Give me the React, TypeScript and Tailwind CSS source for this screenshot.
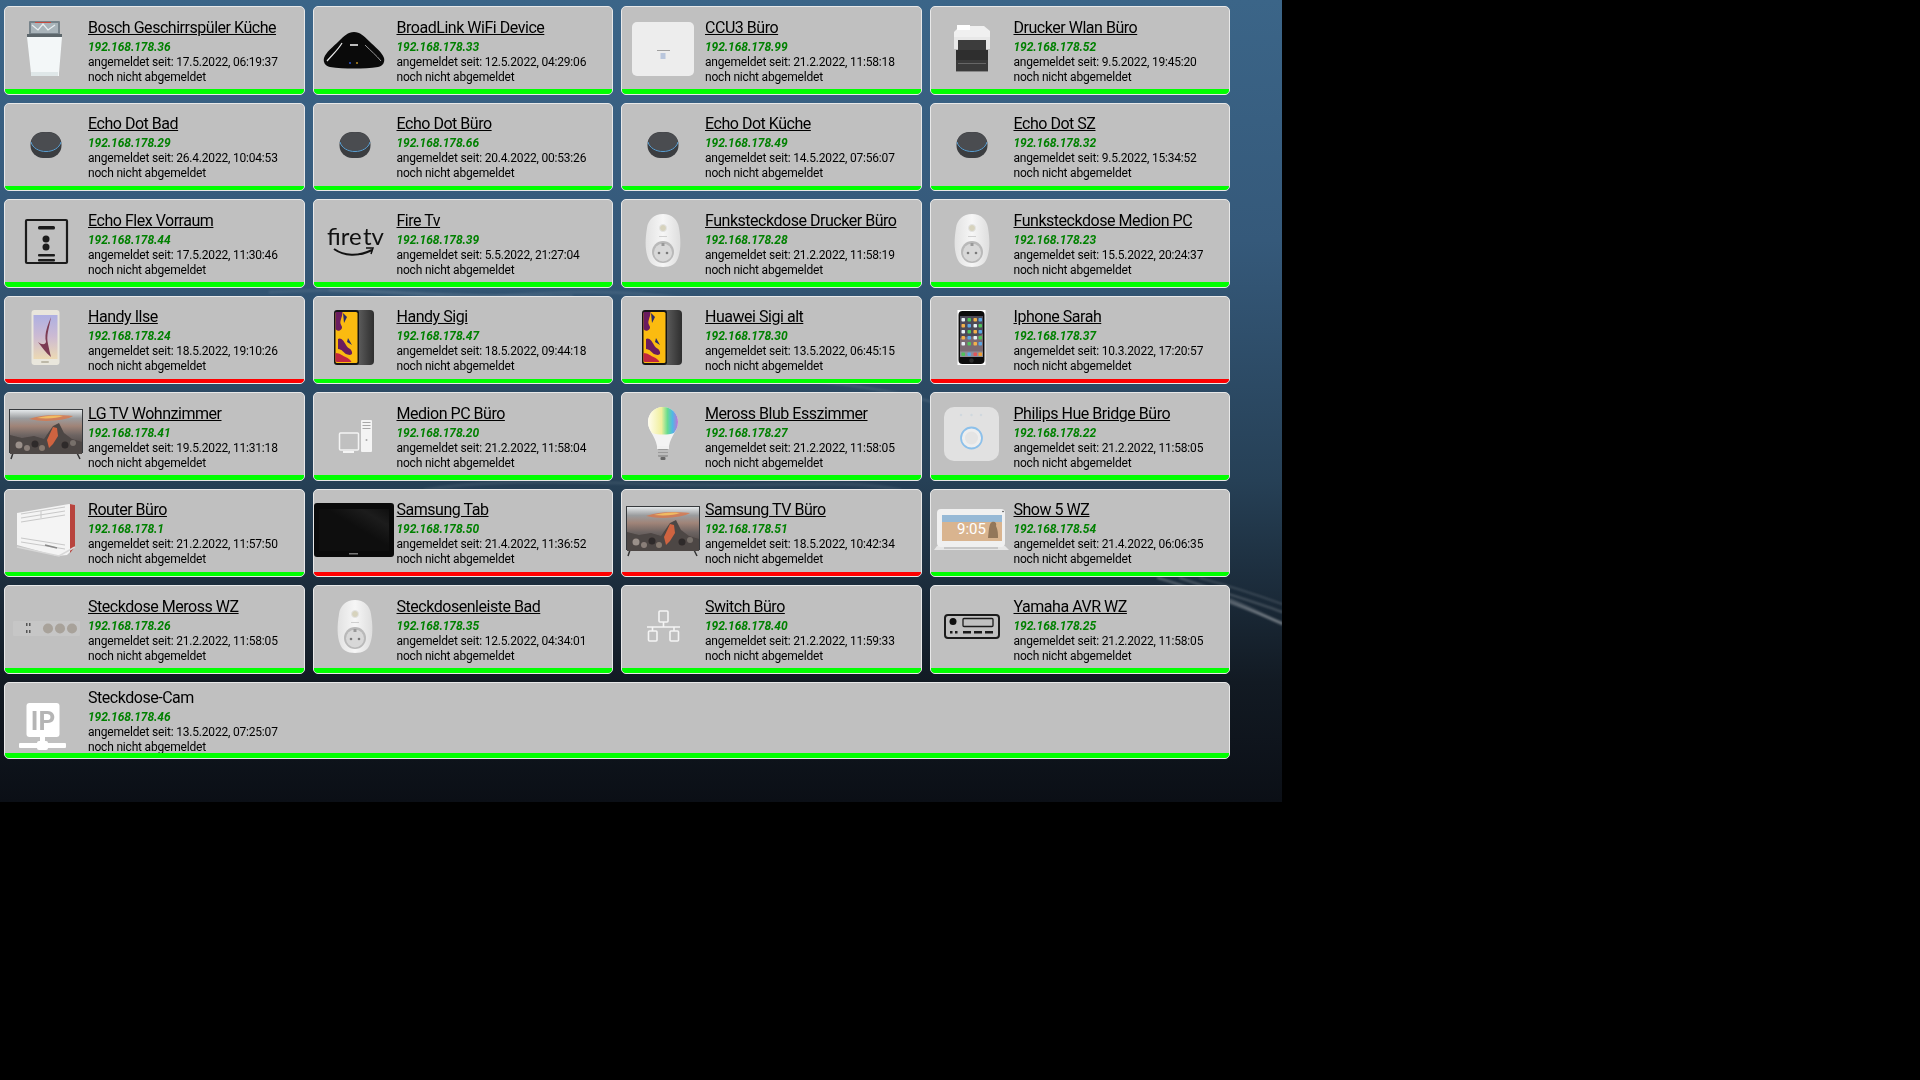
import type { ReactNode } from 'react';

type Device = {
    name: string;
    ip: string;
    since: string;
    icon: string;
    offline?: boolean;
};

const devices: Device[] = [
    { name: 'Bosch Geschirrspüler Küche', ip: '192.168.178.36', since: '17.5.2022, 06:19:37', icon: 'dishwasher' },
    { name: 'BroadLink WiFi Device', ip: '192.168.178.33', since: '12.5.2022, 04:29:06', icon: 'broadlink' },
    { name: 'CCU3 Büro', ip: '192.168.178.99', since: '21.2.2022, 11:58:18', icon: 'ccu' },
    { name: 'Drucker Wlan Büro', ip: '192.168.178.52', since: '9.5.2022, 19:45:20', icon: 'printer' },
    { name: 'Echo Dot Bad', ip: '192.168.178.29', since: '26.4.2022, 10:04:53', icon: 'echo' },
    { name: 'Echo Dot Büro', ip: '192.168.178.66', since: '20.4.2022, 00:53:26', icon: 'echo' },
    { name: 'Echo Dot Küche', ip: '192.168.178.49', since: '14.5.2022, 07:56:07', icon: 'echo' },
    { name: 'Echo Dot SZ', ip: '192.168.178.32', since: '9.5.2022, 15:34:52', icon: 'echo' },
    { name: 'Echo Flex Vorraum', ip: '192.168.178.44', since: '17.5.2022, 11:30:46', icon: 'flex' },
    { name: 'Fire Tv', ip: '192.168.178.39', since: '5.5.2022, 21:27:04', icon: 'firetv' },
    { name: 'Funksteckdose Drucker Büro', ip: '192.168.178.28', since: '21.2.2022, 11:58:19', icon: 'plug' },
    { name: 'Funksteckdose Medion PC', ip: '192.168.178.23', since: '15.5.2022, 20:24:37', icon: 'plug' },
    { name: 'Handy Ilse', ip: '192.168.178.24', since: '18.5.2022, 19:10:26', icon: 'galaxy', offline: true },
    { name: 'Handy Sigi', ip: '192.168.178.47', since: '18.5.2022, 09:44:18', icon: 'huawei' },
    { name: 'Huawei Sigi alt', ip: '192.168.178.30', since: '13.5.2022, 06:45:15', icon: 'huawei' },
    { name: 'Iphone Sarah', ip: '192.168.178.37', since: '10.3.2022, 17:20:57', icon: 'iphone', offline: true },
    { name: 'LG TV Wohnzimmer', ip: '192.168.178.41', since: '19.5.2022, 11:31:18', icon: 'tv' },
    { name: 'Medion PC Büro', ip: '192.168.178.20', since: '21.2.2022, 11:58:04', icon: 'pc' },
    { name: 'Meross Blub Esszimmer', ip: '192.168.178.27', since: '21.2.2022, 11:58:05', icon: 'bulb' },
    { name: 'Philips Hue Bridge Büro', ip: '192.168.178.22', since: '21.2.2022, 11:58:05', icon: 'hue' },
    { name: 'Router Büro', ip: '192.168.178.1', since: '21.2.2022, 11:57:50', icon: 'router' },
    { name: 'Samsung Tab', ip: '192.168.178.50', since: '21.4.2022, 11:36:52', icon: 'tablet', offline: true },
    { name: 'Samsung TV Büro', ip: '192.168.178.51', since: '18.5.2022, 10:42:34', icon: 'tv', offline: true },
    { name: 'Show 5 WZ', ip: '192.168.178.54', since: '21.4.2022, 06:06:35', icon: 'show' },
    { name: 'Steckdose Meross WZ', ip: '192.168.178.26', since: '21.2.2022, 11:58:05', icon: 'strip' },
    { name: 'Steckdosenleiste Bad', ip: '192.168.178.35', since: '12.5.2022, 04:34:01', icon: 'plug' },
    { name: 'Switch Büro', ip: '192.168.178.40', since: '21.2.2022, 11:59:33', icon: 'switch' },
    { name: 'Yamaha AVR WZ', ip: '192.168.178.25', since: '21.2.2022, 11:58:05', icon: 'avr' },
];

function Svg({ children }: { children: ReactNode }) {
    return (
        <svg viewBox="0 0 80 56" className="block h-[56px] w-[80px]">
            <defs>
                <filter id="soft" x="-5%" y="-5%" width="110%" height="110%">
                    <feGaussianBlur stdDeviation=".5" />
                </filter>
            </defs>
            {children}
        </svg>
    );
}

const icons: Record<string, ReactNode> = {
    dishwasher: (
        <Svg>
            <rect x="24" y="1" width="31" height="15" rx="1" fill="#77838a" />
            <g filter="url(#soft)">
                <rect x="26" y="3" width="27" height="10" fill="#a9b4ba" />
                <rect x="30" y="2" width="16" height="1" fill="#c8483e" />
                <path d="M27 5l6 5 5-6 5 6 7-5" stroke="#e8eef0" fill="none" strokeWidth="1.2" />
            </g>
            <rect x="22" y="14" width="35" height="3" fill="#5c666b" />
            <path d="M22 17h35l-3 36v3H26v-3z" fill="#f3f7f8" />
            <rect x="26" y="52" width="27" height="4" fill="#dfe7e8" />
        </Svg>
    ),
    broadlink: (
        <Svg>
            <path d="M40 12c6 0 10 4 15 9 6 6 13 11 15 17 1 4-1 8-6 9-7 1-16 1.500-24 1.500S23 48 16 47c-5-1-7-5-6-9 2-6 9-11 15-17 5-5 9-9 15-9z" fill="#0a0a0a" />
            <path d="M13 41c5-6 11-11 15-18" stroke="#e8e8e8" strokeWidth="1.2" fill="none" />
            <path d="M67 41c-5-6-10-10-16-16" stroke="#9a9a9a" strokeWidth="1" fill="none" />
            <rect x="36" y="24" width="8" height="2" fill="#bbbbbb" />
            <circle cx="36" cy="43" r="1" fill="#2f57c8" />
            <circle cx="43" cy="43" r="1" fill="#b98b1e" />
        </Svg>
    ),
    ccu: (
        <Svg>
            <rect x="10" y="2" width="62" height="54" rx="5" fill="#ededed" />
            <rect x="35" y="30" width="13" height="1" fill="#a0a0a0" />
            <rect x="38.500" y="33" width="5" height="6" fill="#b9c6dc" />
        </Svg>
    ),
    printer: (
        <Svg>
            <path d="M23 12l6-6h24l6 5v8H23z" fill="#f0f0f0" />
            <rect x="26" y="5" width="13" height="5" fill="#ffffff" />
            <rect x="23" y="17" width="36" height="12" fill="#e8e8e8" />
            <rect x="27" y="20" width="28" height="11" fill="#3c3c3c" />
            <rect x="25" y="30" width="32" height="10" fill="#2e2e2e" />
            <rect x="25" y="40" width="32" height="11" fill="#3a3a3a" />
            <rect x="27" y="43" width="28" height="1" fill="#666666" />
            <rect x="25" y="51" width="32" height="1" fill="#888888" />
        </Svg>
    ),
    echo: (
        <Svg>
            <rect x="25.500" y="15" width="31" height="26" rx="12.500" fill="#3b3d40" />
            <ellipse cx="41" cy="24.500" rx="14.500" ry="9.500" fill="#4a4c50" />
            <path d="M26 25c1.500 6 8 9.500 15 9.500s13.500-3.500 15-9.500" stroke="#5aa0d4" strokeWidth="1" fill="none" />
        </Svg>
    ),
    flex: (
        <Svg>
            <rect x="21" y="7" width="41" height="43" rx="1" fill="none" stroke="#1b1b1b" strokeWidth="2.200" />
            <rect x="33" y="13" width="17" height="3.500" rx="1.500" fill="#1b1b1b" />
            <circle cx="41" cy="26" r="3.500" fill="#1b1b1b" />
            <circle cx="41" cy="34" r="3.500" fill="#1b1b1b" />
            <rect x="33" y="41" width="17" height="2.500" rx="1" fill="#1b1b1b" />
            <rect x="33" y="46" width="17" height="2.500" rx="1" fill="#1b1b1b" />
        </Svg>
    ),
    firetv: (
        <Svg>
            <text x="13" y="32" fontFamily="Lato, sans-serif" fontSize="24" fill="#111111">fire</text>
            <text x="49" y="32" fontFamily="Lato, sans-serif" fontSize="24" fill="#111111">tv</text>
            <path d="M20 36c10 7 24 8 38 1" stroke="#111111" strokeWidth="2" fill="none" />
            <path d="M52 35l7 0-2 6" stroke="#111111" strokeWidth="1.500" fill="none" />
        </Svg>
    ),
    plug: (
        <Svg>
            <defs>
                <linearGradient id="plugBody" x1="0" y1="0" x2="1" y2="0">
                    <stop offset="0" stopColor="#e2e2e2" />
                    <stop offset=".5" stopColor="#f6f6f6" />
                    <stop offset="1" stopColor="#dedede" />
                </linearGradient>
            </defs>
            <path d="M41 1c9 0 15 6 16 14 2 12 2 22-1 30-2 6-7 9-15 9s-13-3-15-9c-3-8-3-18-1-30 1-8 7-14 16-14z" fill="url(#plugBody)" />
            <circle cx="41" cy="15" r="3.500" fill="#d7d3bd" stroke="#e3e3e3" />
            <rect x="37" y="23" width="8" height="1" fill="#cfcfcf" />
            <circle cx="41" cy="39" r="11" fill="#b9b9b9" />
            <circle cx="41" cy="39.500" r="9" fill="#d8d8d8" />
            <rect x="39.500" y="30" width="3" height="3" fill="#999999" />
            <circle cx="37" cy="40" r="1.300" fill="#7a7a7a" />
            <circle cx="45" cy="40" r="1.300" fill="#7a7a7a" />
        </Svg>
    ),
    galaxy: (
        <Svg>
            <defs>
                <linearGradient id="galaxyScreen" x1="0" y1="0" x2="0" y2="1">
                    <stop offset="0" stopColor="#aeb0e2" />
                    <stop offset=".5" stopColor="#cdbbd2" />
                    <stop offset="1" stopColor="#ecd9b3" />
                </linearGradient>
            </defs>
            <rect x="26.500" y="0" width="28" height="55" rx="3" fill="#e9e6dc" />
            <rect x="28.500" y="5" width="24" height="44" fill="url(#galaxyScreen)" />
            <path d="M46 7c-2 12-5 18-3 27 1 5 2 9 3 13-5-4-9-10-13-15 4 3 7 3 8 0-2-9 2-17 5-25z" fill="#7c3a52" filter="url(#soft)" />
            <rect x="36" y="51" width="8" height="2" rx="1" fill="#bdb8a8" />
        </Svg>
    ),
    huawei: (
        <Svg>
            <defs>
                <linearGradient id="huaweiBack" x1="0" y1="0" x2="1" y2="0">
                    <stop offset="0" stopColor="#7a7a7a" />
                    <stop offset="1" stopColor="#2e2e2e" />
                </linearGradient>
            </defs>
            <rect x="34" y="0" width="26" height="55" rx="4" fill="url(#huaweiBack)" />
            <rect x="20" y="0" width="25" height="55" rx="3" fill="#141414" />
            <rect x="21.500" y="2" width="22" height="51" rx="1.500" fill="#fbbb10" />
            <g filter="url(#soft)">
                <path d="M21.500 2h7c0 3-1 5-2 9s3 5 1 8-6 2-6-1zM24 29c3-2 6 2 8 6s5 3 6 7-4 3-6 2-4-5-8-5z" fill="#6b1e5e" />
                <path d="M21.500 43c5 0 7 3 10 4s5 3 6 5H23c-1 0-1.500-1-1.500-2z" fill="#c0283f" />
                <path d="M29 3l4 4-3 6zM34 28l4 7-5-3z" fill="#2b2a6b" />
            </g>
        </Svg>
    ),
    iphone: (
        <Svg>
            <rect x="26.500" y="0" width="28" height="55" fill="#ffffff" />
            <rect x="27.500" y="1" width="26" height="53" rx="4" fill="#0c0c0c" />
            <rect x="29" y="6" width="23" height="41" fill="#4c4a58" />
            <path d="M29 28c8-3 15 0 23-4v23H29z" fill="#7a6a72" />
            {[8, 14, 20, 26, 32].map((y) =>
                [30.5, 36.5, 42.5, 47.5].map((x, i) => (
                    <rect
                        key={`${x}-${y}`}
                        x={x}
                        y={y}
                        width="3.500"
                        height="3.500"
                        rx=".8"
                        fill={['#e7f0f5', '#4fc25a', '#f2b14b', '#5aa7e6'][(i + y) % 4]}
                    />
                )),
            )}
            <rect x="29" y="41.500" width="23" height="5.500" fill="#8f8d99" />
            {[30.5, 36.5, 42.5, 47.5].map((x, i) => (
                <rect key={x} x={x} y="42.500" width="3.500" height="3.500" rx=".8" fill={['#4fc25a', '#5aa7e6', '#e2555a', '#f0a030'][i]} />
            ))}
            <circle cx="40.500" cy="50.500" r="2.200" fill="#2a2a2a" />
        </Svg>
    ),
    tv: (
        <Svg>
            <defs>
                <linearGradient id="tvSky" x1="0" y1="0" x2="0" y2="1">
                    <stop offset="0" stopColor="#e4e8ea" />
                    <stop offset=".2" stopColor="#9a9c9e" />
                    <stop offset=".38" stopColor="#a08478" />
                    <stop offset=".6" stopColor="#6d6462" />
                    <stop offset="1" stopColor="#3f3a38" />
                </linearGradient>
            </defs>
            <path d="M8 47l-2 6M72 47l3 6" stroke="#333333" strokeWidth="1.500" />
            <rect x="4" y="3" width="74" height="44" fill="#36393c" />
            <rect x="5" y="4" width="72" height="42" fill="url(#tvSky)" />
            <g filter="url(#soft)">
                <path d="M24 13c12-4 24-5 44-3-6 4-28 7-44 3z" fill="#d9774a" opacity=".8" />
                <path d="M32 12c8-2 16-3 26-2-5 2-14 3-26 2z" fill="#f0bb62" />
                <path d="M5 29l12 3 12-2 10 3 9-13 6-3 5 10 8 6 10 3v12H5z" fill="#4e4644" />
                <path d="M42 34l6-13 4 1 1 8-5 8-4 4z" fill="#cf6440" />
                <circle cx="14" cy="39" r="3.500" fill="#9a908a" />
                <circle cx="22" cy="42" r="3" fill="#8a7f79" />
                <circle cx="30" cy="38" r="3.500" fill="#2f2a29" />
                <circle cx="37" cy="42" r="3" fill="#85796f" />
                <circle cx="60" cy="39" r="3.500" fill="#2f2a29" />
                <circle cx="68" cy="37" r="3" fill="#77706a" />
            </g>
        </Svg>
    ),
    pc: (
        <Svg>
            <rect x="25.500" y="27" width="19" height="17" fill="none" stroke="#f4f4f4" strokeWidth="1.500" rx="1" />
            <rect x="29" y="45" width="11" height="2" fill="#f4f4f4" />
            <rect x="47" y="14" width="11" height="32" rx="1" fill="#f4f4f4" />
            <rect x="48.500" y="16" width="8" height="1" fill="#a8a8a8" />
            <rect x="48.500" y="19" width="8" height="1" fill="#a8a8a8" />
            <rect x="48.500" y="22" width="8" height="1" fill="#a8a8a8" />
            <circle cx="52.500" cy="34" r="1" fill="#a8a8a8" />
        </Svg>
    ),
    bulb: (
        <Svg>
            <defs>
                <linearGradient id="bulbGlow" x1="0" y1="0" x2="1" y2="0">
                    <stop offset="0" stopColor="#fffdf0" />
                    <stop offset=".45" stopColor="#f0ef9c" />
                    <stop offset=".65" stopColor="#67dc8f" />
                    <stop offset=".82" stopColor="#4fb7e6" />
                    <stop offset="1" stopColor="#c473d3" />
                </linearGradient>
            </defs>
            <path d="M41 1c9 0 15 7 15 15 0 9-7 13-9 24H35c-2-11-9-15-9-24 0-8 6-15 15-15z" fill="#f3f3f3" />
            <path d="M41 1c9 0 15 7 15 15 0 5-2 8-4 11-6 2-16 2-22 0-2-3-4-6-4-11 0-8 6-15 15-15z" fill="url(#bulbGlow)" />
            <rect x="35" y="40" width="12" height="3" fill="#f0f0f0" />
            <rect x="36" y="43" width="10" height="8" rx="1" fill="#9a9a9a" />
            <path d="M36 45h10M36 48h10" stroke="#e0e0e0" strokeWidth="1" />
            <rect x="38.500" y="51" width="5" height="3" rx="1" fill="#666666" />
        </Svg>
    ),
    hue: (
        <Svg>
            <rect x="13" y="1" width="55" height="54" rx="10" fill="#e1e1e1" />
            <circle cx="30" cy="9" r="1.200" fill="#cfd8de" />
            <circle cx="40.500" cy="9" r="1.200" fill="#cfd8de" />
            <circle cx="50" cy="9" r="1.200" fill="#cfd8de" />
            <circle cx="40.500" cy="32" r="10.500" fill="#eeeeee" stroke="#8cc0ea" strokeWidth="1.800" />
            <circle cx="40.500" cy="32" r="6.500" fill="#e4e4e4" />
        </Svg>
    ),
    router: (
        <Svg>
            <path d="M12 10l52-9 6 1v42l-8 8-10 1-40-11z" fill="#f4f4f4" />
            <path d="M65 1l5 1v42l-5 6z" fill="#b8443e" />
            <path d="M16 11l44-7M16 15l44-7M16 19l44-7M16 35l44 7M16 39l44 7M36 8v7" stroke="#c8c8c8" strokeWidth="1" fill="none" />
            <path d="M40 42l12 3" stroke="#888888" strokeWidth="1.500" />
            <path d="M12 44l42 9 16-9" stroke="#d8d8d8" strokeWidth="1.500" fill="none" />
        </Svg>
    ),
    tablet: (
        <Svg>
            <defs>
                <linearGradient id="tabletSheen" x1="0" y1="1" x2="1" y2="0">
                    <stop offset=".55" stopColor="#0e0e0e" />
                    <stop offset=".8" stopColor="#1c1c1c" />
                    <stop offset="1" stopColor="#0f0f0f" />
                </linearGradient>
            </defs>
            <rect x="0" y="0" width="80" height="54" rx="3" fill="#0a0a0a" />
            <rect x="5" y="6" width="70" height="42" fill="url(#tabletSheen)" />
            <rect x="35" y="50" width="9" height="1.500" fill="#777777" />
        </Svg>
    ),
    show: (
        <Svg>
            <path d="M3 47l3-4h68l4 4z" fill="#e6e6e6" />
            <rect x="6" y="6" width="68" height="38" rx="4" fill="#f0f0f0" />
            <rect x="11" y="12" width="60" height="26" fill="#d9b48f" />
            <rect x="11" y="12" width="60" height="7" fill="#96b9d6" />
            <text x="26" y="31" fontFamily="Roboto, sans-serif" fontSize="15" fill="#ffffff">9:05</text>
            <path d="M57 35c1-8 1-15 4-16 3-1 5 1 4 4 2 4 2 8 2 12z" fill="#93775a" filter="url(#soft)" />
            <circle cx="72" cy="8.500" r=".8" fill="#444444" />
            <rect x="13" y="44.500" width="54" height="1" fill="#a8a8a8" />
        </Svg>
    ),
    strip: (
        <Svg>
            <rect x="8" y="22" width="67" height="15" rx="1" fill="#c6c6c6" />
            <rect x="21" y="24" width="1.500" height="3" fill="#555555" />
            <rect x="24" y="24" width="1.500" height="3" fill="#555555" />
            <rect x="21" y="31" width="1.500" height="3" fill="#555555" />
            <rect x="24" y="31" width="1.500" height="3" fill="#555555" />
            <circle cx="43" cy="29.500" r="5" fill="#a8a29a" />
            <circle cx="55" cy="29.500" r="5" fill="#a8a29a" />
            <circle cx="67" cy="29.500" r="5" fill="#a8a29a" />
        </Svg>
    ),
    switch: (
        <Svg>
            <g fill="none" stroke="#f4f4f4" strokeWidth="1.600">
                <rect x="37" y="12" width="9" height="11" rx="1" />
                <rect x="26.500" y="32" width="8.500" height="10" rx="1" />
                <rect x="48" y="32" width="8.500" height="10" rx="1" />
                <path d="M41.500 23v5M25 28h33M30.500 28v4M52 28v4" />
            </g>
        </Svg>
    ),
    avr: (
        <Svg>
            <rect x="14" y="16" width="54" height="23" rx="3" fill="none" stroke="#1b1b1b" strokeWidth="2" />
            <circle cx="22" cy="22.500" r="3.500" fill="#0f0f0f" />
            <rect x="32" y="19.500" width="30" height="8" rx="1" fill="none" stroke="#1b1b1b" strokeWidth="1.300" />
            <rect x="19" y="32" width="2.500" height="2.500" fill="#1b1b1b" />
            <rect x="24" y="32" width="2.500" height="2.500" fill="#1b1b1b" />
            <rect x="32" y="32" width="8" height="2.500" fill="#1b1b1b" />
            <rect x="43" y="32" width="8" height="2.500" fill="#1b1b1b" />
            <rect x="54" y="32" width="8" height="2.500" fill="#1b1b1b" />
        </Svg>
    ),
    ipNode: (
        <Svg>
            <rect x="21.500" y="7" width="33" height="34" rx="3" fill="#ffffff" />
            <text x="38" y="34" textAnchor="middle" fontFamily="Roboto, sans-serif" fontWeight="700" fontSize="26" fill="#b5b5b5">IP</text>
            <rect x="35" y="41" width="5" height="6" fill="#ffffff" />
            <rect x="14" y="47" width="47" height="5" rx="1" fill="#ffffff" />
            <rect x="32" y="45" width="11" height="9" rx="2" fill="#ffffff" />
        </Svg>
    ),
};

function DeviceCard({ device, wide }: { device: Device; wide?: boolean }) {
    return (
        <div className={`flex flex-col overflow-hidden rounded-[5px] border border-[#e8e8e8] bg-[#c0c0c0] ${wide ? 'col-span-4 h-[77px]' : 'h-[88.3px]'}`}>
            <div className="flex min-h-0 flex-1">
                <div className="mt-[13px] w-[80px] shrink-0">{icons[device.icon]}</div>
                <div className={`ml-[3px] text-[12px] leading-[15px] tracking-[-0.19px] text-black ${wide ? 'pt-[5.3px]' : 'pt-[10.3px]'}`}>
                    <div className={`text-[16px] leading-[20px] tracking-[-0.47px] ${wide ? '' : 'underline'}`}>{device.name}</div>
                    <div className="mt-[2px] font-bold italic tracking-[-0.08px] text-[#008000]">{device.ip}</div>
                    <div>angemeldet seit: {device.since}</div>
                    <div>noch nicht abgemeldet</div>
                </div>
            </div>
            <div className={`h-[4.5px] shrink-0 rounded-b-[3px] ${device.offline ? 'bg-[#ff0000]' : 'bg-[#00ff00]'}`} />
        </div>
    );
}

export default function App() {
    return (
        <div className="min-h-screen bg-black font-[Roboto,sans-serif]">
            <div className="relative h-[802px] w-[1282px] overflow-hidden bg-[linear-gradient(180deg,#3b6588_0%,#35597a_30%,#264056_60%,#121a23_85%,#0b0f16_100%)]">
                <svg viewBox="0 0 1282 802" className="absolute inset-0 h-full w-full">
                    <defs>
                        <filter id="streakBlur">
                            <feGaussianBlur stdDeviation="1" />
                        </filter>
                    </defs>
                    <g fill="none" stroke="#ffffff" strokeLinecap="round" filter="url(#streakBlur)">
                        <path d="M270 292C360 286 440 300 500 296S620 288 690 300" strokeWidth="3" opacity=".08" />
                        <path d="M330 290C420 292 500 298 572 296" strokeWidth="2" opacity=".1" />
                        <path d="M820 382C880 388 920 396 990 420" strokeWidth="2" opacity=".12" />
                        <path d="M425 490C470 482 520 480 654 484S850 478 900 490" strokeWidth="3" opacity=".08" />
                        <path d="M1158 578C1200 590 1240 606 1282 623" strokeWidth="2" opacity=".28" />
                        <path d="M1180 578C1220 592 1250 600 1282 612" strokeWidth="2" opacity=".22" />
                        <path d="M1200 578C1230 586 1260 596 1282 604" strokeWidth="1.500" opacity=".18" />
                        <path d="M1230 600C1250 608 1265 616 1282 624" strokeWidth="3" opacity=".22" />
                    </g>
                </svg>
                <div className="relative ml-[4px] grid w-[1226px] grid-cols-4 gap-x-[8px] gap-y-[8.2px] pt-[6.3px]">
                    {devices.map((device) => (
                        <DeviceCard key={device.name} device={device} />
                    ))}
                    <DeviceCard wide device={{ name: 'Steckdose-Cam', ip: '192.168.178.46', since: '13.5.2022, 07:25:07', icon: 'ipNode' }} />
                </div>
            </div>
        </div>
    );
}
